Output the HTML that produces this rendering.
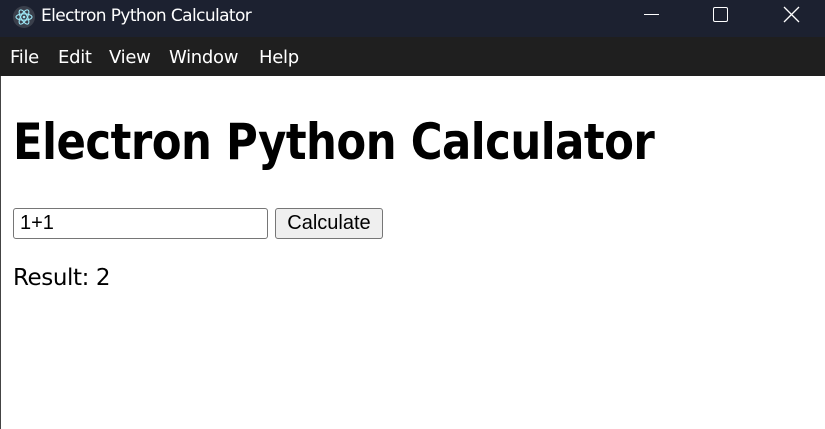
<!DOCTYPE html>
<html><head><meta charset="utf-8"><style>
*{margin:0;padding:0;box-sizing:border-box}
html,body{width:825px;height:429px;overflow:hidden;background:#fff}
body{font-family:"Liberation Sans",sans-serif;position:relative}
.tb{position:absolute;left:0;top:0;width:825px;height:37px;background:#1c2130;color:#fff}
.tb .t{position:absolute;left:41px;top:6px;font-size:17px;font-family:"DejaVu Sans","Liberation Sans",sans-serif;letter-spacing:-0.6px}
.mb{position:absolute;left:0;top:37px;width:825px;height:39px;background:#1f1f1f;color:#fff;font-size:18px;font-family:"DejaVu Sans","Liberation Sans",sans-serif;letter-spacing:-0.3px}
.mb span{position:absolute;top:10px}
.side{position:absolute;left:0;top:76px;width:1px;height:353px;background:#444}
h1{position:absolute;left:13px;top:112px;font-size:50px;font-weight:bold;font-family:"DejaVu Sans","Liberation Sans",sans-serif;letter-spacing:-0.6px;line-height:60px;transform:scaleX(0.868);transform-origin:0 0;white-space:nowrap}
.in{position:absolute;left:13px;top:208px;width:255px;height:31px;border:1px solid #767676;border-radius:3px;font-size:20px;padding:3px 6px}
.bt{position:absolute;left:275px;top:208px;width:108px;height:31px;border:1px solid #767676;border-radius:3px;background:#efefef;font-size:20px;text-align:center;line-height:28px}
.r{position:absolute;left:13px;top:265px;font-size:23px;font-family:"DejaVu Sans","Liberation Sans",sans-serif;letter-spacing:-0.4px}
</style></head><body>
<div class="tb">
<svg style="position:absolute;left:12px;top:5px" width="24" height="24" viewBox="0 0 24 24"><circle cx="12" cy="12" r="11" fill="#3a3f4b"/><g fill="none" stroke="#9feaf9" stroke-width="1.1"><ellipse cx="12" cy="12" rx="8" ry="3.2"/><ellipse cx="12" cy="12" rx="8" ry="3.2" transform="rotate(60 12 12)"/><ellipse cx="12" cy="12" rx="8" ry="3.2" transform="rotate(120 12 12)"/></g><circle cx="12" cy="12" r="1.3" fill="#9feaf9"/></svg>
<span class="t">Electron Python Calculator</span>
<div style="position:absolute;left:644px;top:14px;width:15px;height:1px;background:#fff"></div>
<div style="position:absolute;left:713px;top:7px;width:15px;height:15px;border:1.3px solid #fff;border-radius:2px"></div>
<svg style="position:absolute;left:783px;top:6px" width="17" height="17"><path d="M1 1L16 16M16 1L1 16" stroke="#fff" stroke-width="1.3"/></svg>
</div>
<div class="mb"><span style="left:10px">File</span><span style="left:58px">Edit</span><span style="left:109px">View</span><span style="left:169px">Window</span><span style="left:259px">Help</span></div>
<div class="side"></div>
<h1>Electron Python Calculator</h1>
<div class="in">1+1</div>
<div class="bt">Calculate</div>
<div class="r">Result: 2</div>
</body></html>
